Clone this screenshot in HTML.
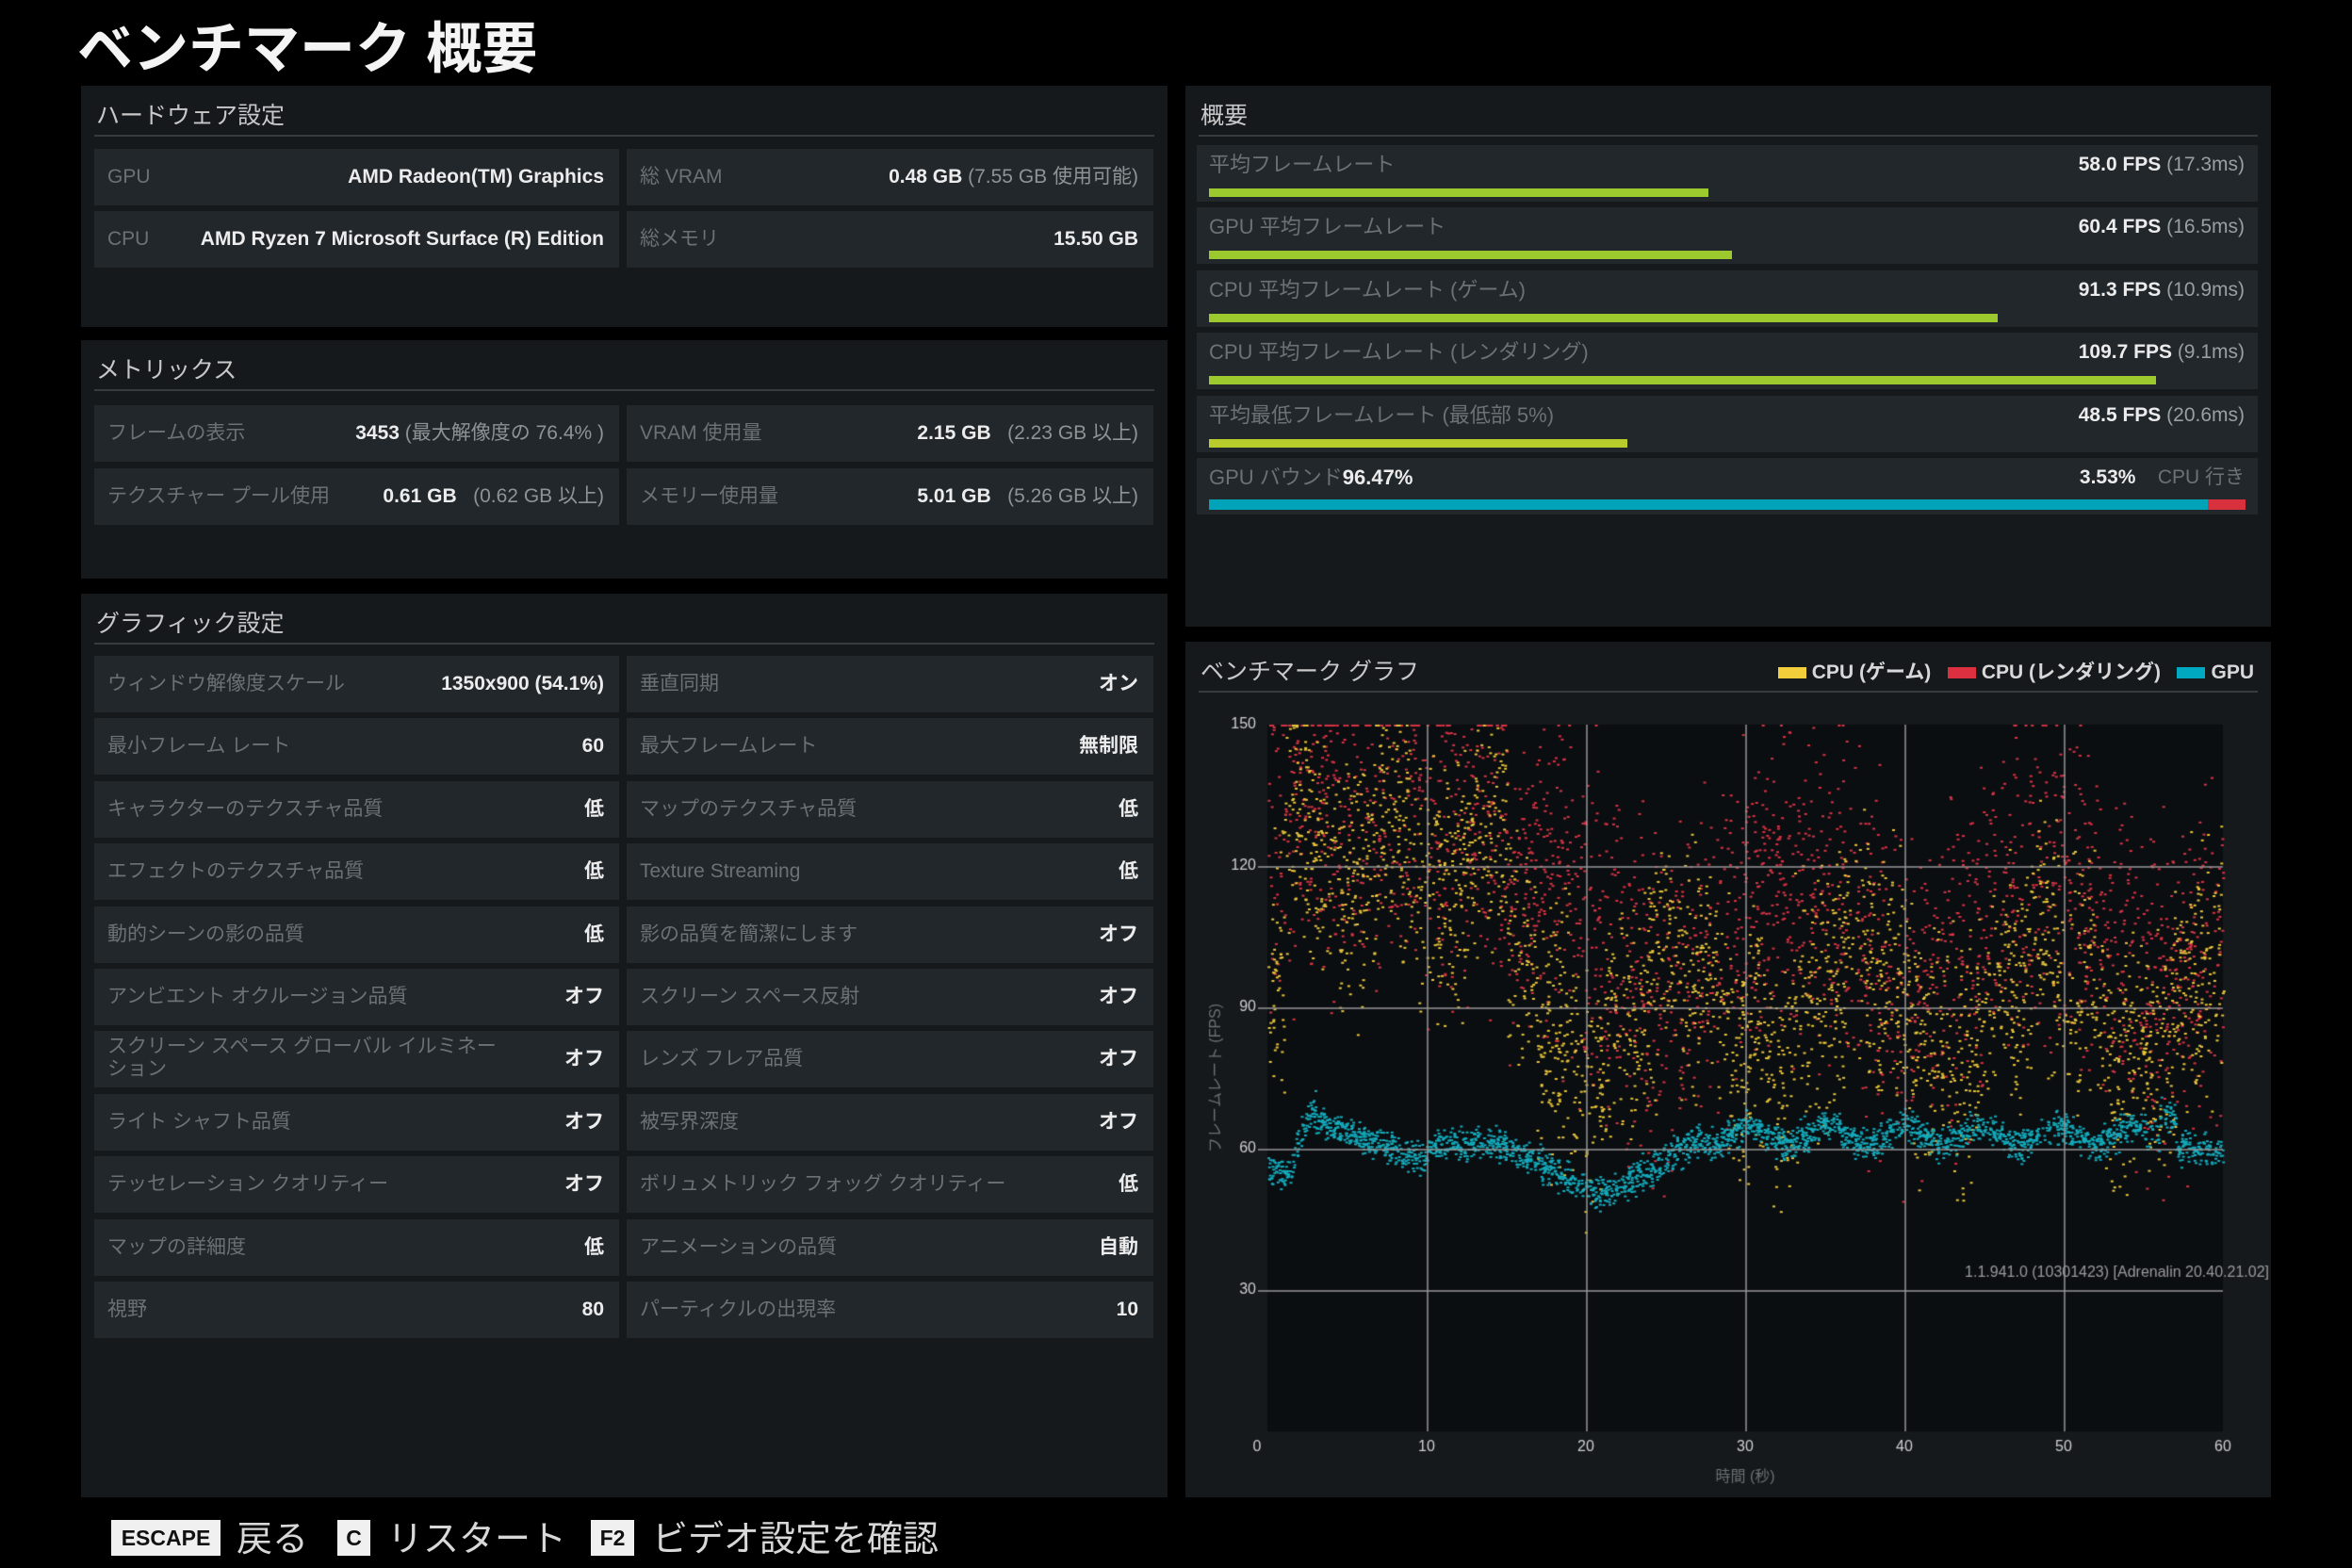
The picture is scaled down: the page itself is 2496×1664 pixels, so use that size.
<!DOCTYPE html>
<html><head><meta charset="utf-8"><style>
*{margin:0;padding:0;box-sizing:border-box}
body{width:2496px;height:1664px;background:#000;position:relative;overflow:hidden;font-family:"Liberation Sans Narrow","Liberation Sans","Noto Sans CJK JP",sans-serif;color:#e8e8e8}
.a{position:absolute}
.title{left:82px;top:4px;font-size:59px;font-weight:bold;color:#f4f4f4;font-family:"Liberation Sans","Noto Sans CJK JP",sans-serif;letter-spacing:0px}
.panel{position:absolute;background:#15191c}
.ph{position:absolute;left:16px;top:12px;font-size:25px;color:#c8c8c8}
.sep{position:absolute;left:14px;right:14px;top:52px;height:2px;background:#353b3f}
.row{position:absolute;background:#22272b;height:60px}
.row .l{position:absolute;left:14px;top:17px;font-size:21px;line-height:26px;color:#6b7174;white-space:nowrap}
.row .v{position:absolute;right:16px;top:17px;font-size:21px;line-height:26px;color:#ececec;font-weight:bold;white-space:nowrap}
.row .v span{font-weight:normal;color:#8e9396}
.sr{position:absolute;left:1270px;width:1126px;height:60px;background:#22272b}
.sr .l{position:absolute;left:13px;top:8px;font-size:22px;line-height:26px;color:#6b7174}
.sr .v{position:absolute;right:14px;top:8px;font-size:21px;line-height:26px;color:#ececec;font-weight:bold}
.sr .v span{font-weight:normal;color:#9a9fa2}
.bar{position:absolute;left:13px;top:46px;height:9px;background:#9cc92d}
.key{position:absolute;background:#f0f0f0;color:#111;font-weight:bold;font-size:23px;text-align:center;line-height:38px;height:38px;top:1613px}
.ft{position:absolute;top:1602px;font-size:38px;color:#d8d8d8;font-family:"Liberation Sans","Noto Sans CJK JP",sans-serif}
</style></head><body>
<div class="a title">ベンチマーク 概要</div>

<div class="panel" style="left:86px;top:91px;width:1153px;height:256px">
<div class="ph">ハードウェア設定</div><div class="sep"></div></div>
<div class="row" style="left:100px;top:158px;width:557px"><div class="l">GPU</div><div class="v">AMD Radeon(TM) Graphics</div></div>
<div class="row" style="left:665px;top:158px;width:559px"><div class="l">総 VRAM</div><div class="v">0.48 GB <span>(7.55 GB 使用可能)</span></div></div>
<div class="row" style="left:100px;top:224px;width:557px"><div class="l">CPU</div><div class="v">AMD Ryzen 7 Microsoft Surface (R) Edition</div></div>
<div class="row" style="left:665px;top:224px;width:559px"><div class="l">総メモリ</div><div class="v">15.50 GB</div></div>

<div class="panel" style="left:86px;top:361px;width:1153px;height:253px">
<div class="ph">メトリックス</div><div class="sep"></div></div>
<div class="row" style="left:100px;top:430px;width:557px"><div class="l">フレームの表示</div><div class="v">3453 <span>(最大解像度の 76.4% )</span></div></div>
<div class="row" style="left:665px;top:430px;width:559px"><div class="l">VRAM 使用量</div><div class="v">2.15 GB &nbsp; <span>(2.23 GB 以上)</span></div></div>
<div class="row" style="left:100px;top:497px;width:557px"><div class="l">テクスチャー プール使用</div><div class="v">0.61 GB &nbsp; <span>(0.62 GB 以上)</span></div></div>
<div class="row" style="left:665px;top:497px;width:559px"><div class="l">メモリー使用量</div><div class="v">5.01 GB &nbsp; <span>(5.26 GB 以上)</span></div></div>

<div class="panel" style="left:86px;top:630px;width:1153px;height:959px">
<div class="ph">グラフィック設定</div><div class="sep"></div></div>
<div id="gfx"></div>

<div class="panel" style="left:1258px;top:91px;width:1152px;height:574px">
<div class="ph">概要</div><div class="sep"></div></div>
<div class="sr" style="top:154px"><div class="l">平均フレームレート</div><div class="v">58.0 FPS <span>(17.3ms)</span></div><div class="bar" style="width:530px"></div></div>
<div class="sr" style="top:220px"><div class="l">GPU 平均フレームレート</div><div class="v">60.4 FPS <span>(16.5ms)</span></div><div class="bar" style="width:555px"></div></div>
<div class="sr" style="top:287px"><div class="l">CPU 平均フレームレート (ゲーム)</div><div class="v">91.3 FPS <span>(10.9ms)</span></div><div class="bar" style="width:837px"></div></div>
<div class="sr" style="top:353px"><div class="l">CPU 平均フレームレート (レンダリング)</div><div class="v">109.7 FPS <span>(9.1ms)</span></div><div class="bar" style="width:1005px"></div></div>
<div class="sr" style="top:420px"><div class="l">平均最低フレームレート (最低部 5%)</div><div class="v">48.5 FPS <span>(20.6ms)</span></div><div class="bar" style="width:444px;background:#b8cc2c"></div></div>
<div class="sr" style="top:486px"><div class="l">GPU バウンド<b style="color:#ececec">96.47%</b></div><div class="v">3.53% &nbsp;&nbsp; <span style="color:#6b7174">CPU 行き</span></div>
<div class="bar" style="width:1060px;top:44px;height:11px;background:#00a3b8"></div><div class="bar" style="left:1073px;width:40px;top:44px;height:11px;background:#d8303c"></div></div>

<div class="panel" style="left:1258px;top:681px;width:1152px;height:908px">
<div class="ph">ベンチマーク グラフ</div><div class="sep"></div>
<div class="a" style="right:18px;top:16px;font-size:21px;color:#d8d8d8;font-weight:bold;white-space:nowrap">
<span style="display:inline-block;width:30px;height:12px;background:#f2cf3a;margin-right:6px"></span>CPU (ゲーム) &nbsp;
<span style="display:inline-block;width:30px;height:12px;background:#dc3040;margin-right:6px"></span>CPU (レンダリング) &nbsp;
<span style="display:inline-block;width:30px;height:12px;background:#00a8c0;margin-right:6px"></span>GPU</div>
</div>
<canvas id="cv" width="1152" height="908" class="a" style="left:1258px;top:681px"></canvas>

<div class="key" style="left:118px;width:116px">ESCAPE</div><div class="ft" style="left:251px">戻る</div>
<div class="key" style="left:358px;width:35px">C</div><div class="ft" style="left:411px">リスタート</div>
<div class="key" style="left:627px;width:46px">F2</div><div class="ft" style="left:692px">ビデオ設定を確認</div>

<script>
var rows=[["ウィンドウ解像度スケール","1350x900 (54.1%)","垂直同期","オン"],["最小フレーム レート","60","最大フレームレート","無制限"],["キャラクターのテクスチャ品質","低","マップのテクスチャ品質","低"],["エフェクトのテクスチャ品質","低","Texture Streaming","低"],["動的シーンの影の品質","低","影の品質を簡潔にします","オフ"],["アンビエント オクルージョン品質","オフ","スクリーン スペース反射","オフ"],["スクリーン スペース グローバル イルミネー<br>ション","オフ","レンズ フレア品質","オフ"],["ライト シャフト品質","オフ","被写界深度","オフ"],["テッセレーション クオリティー","オフ","ボリュメトリック フォッグ クオリティー","低"],["マップの詳細度","低","アニメーションの品質","自動"],["視野","80","パーティクルの出現率","10"]];
var h="";rows.forEach(function(r,i){var t=696+Math.round(i*66.4);
var ls=(i==6)?'style="top:5px;line-height:24px"':'';
h+='<div class="row" style="left:100px;top:'+t+'px;width:557px"><div class="l" '+ls+'>'+r[0]+'</div><div class="v">'+r[1]+'</div></div>';
h+='<div class="row" style="left:665px;top:'+t+'px;width:559px"><div class="l">'+r[2]+'</div><div class="v">'+r[3]+'</div></div>';});
document.getElementById("gfx").innerHTML=h;

var c=document.getElementById("cv").getContext("2d");
var ox=1258,oy=681;
function X(t){return 1345-ox+t*(1014/60)}
function Y(f){return 1519-oy-f*(750/150)}
c.fillStyle="#0b0e11";c.fillRect(X(0),Y(150),1014,750);
var s=12345;function R(){s=(s*16807)%2147483647;return s/2147483647}
function G(){return (R()+R()+R()-1.5)*1.4}
function gpu(t){if(t<1.5)return 55;if(t<3)return 58+ (t-1.5)*8;if(t<10)return 66-(t-3)*1.2;if(t<14)return 61;if(t<21)return 62-(t-14)*1.7;if(t<27)return 50+(t-21)*2;if(t<56)return 63+Math.sin(t*1.3)*2;if(t<57)return 67;return 60;}
function yel(t){if(t<1)return 100;if(t<15)return 122+Math.sin(t)*8;return 90+Math.sin(t*0.55)*12+Math.sin(t*2.1)*6;}
function red(t){if(t<15)return 130;return 105+Math.sin(t*0.4+1)*12;}
var i,t,f;
for(i=0;i<2600;i++){t=R()*60;f=red(t)+G()*24;if(f>150)f=150;if(f<20)continue;c.fillStyle="#d83344";c.fillRect(X(t),Y(f),3,2);}
for(i=0;i<2800;i++){t=R()*60;f=yel(t)+G()*18;if(f>150)f=150;c.fillStyle="#e8c53a";c.fillRect(X(t),Y(f),3,2);}
for(i=0;i<2600;i++){t=R()*60;f=gpu(t)+G()*2.3;c.fillStyle="#14aabb";c.fillRect(X(t),Y(f),3,2);}
c.fillStyle="rgba(150,150,150,0.75)";
[30,60,90,120].forEach(function(v){c.fillRect(X(0)-10,Math.round(Y(v)),1024,2)});
[10,20,30,40,50].forEach(function(v){c.fillRect(Math.round(X(v)),Y(150),2,750)});
c.font="16px 'Liberation Sans Narrow', sans-serif";c.fillStyle="#cfcfcf";c.textAlign="right";
[30,60,90,120,150].forEach(function(v){c.fillText(v,X(0)-12,Y(v)+4)});
c.textAlign="center";
[0,10,20,30,40,50,60].forEach(function(v){c.fillText(v,v==0?1334-ox:X(v),1540-oy)});
c.fillStyle="#6b7174";c.fillText("時間 (秒)",X(30),1572-oy);
c.save();c.translate(X(0)-50,Y(75));c.rotate(-Math.PI/2);c.fillText("フレームレート (FPS)",0,0);c.restore();
c.textAlign="right";c.fillStyle="#9a9a9a";c.fillText("1.1.941.0 (10301423) [Adrenalin 20.40.21.02]",1150,1355-oy);
</script>
</body></html>
